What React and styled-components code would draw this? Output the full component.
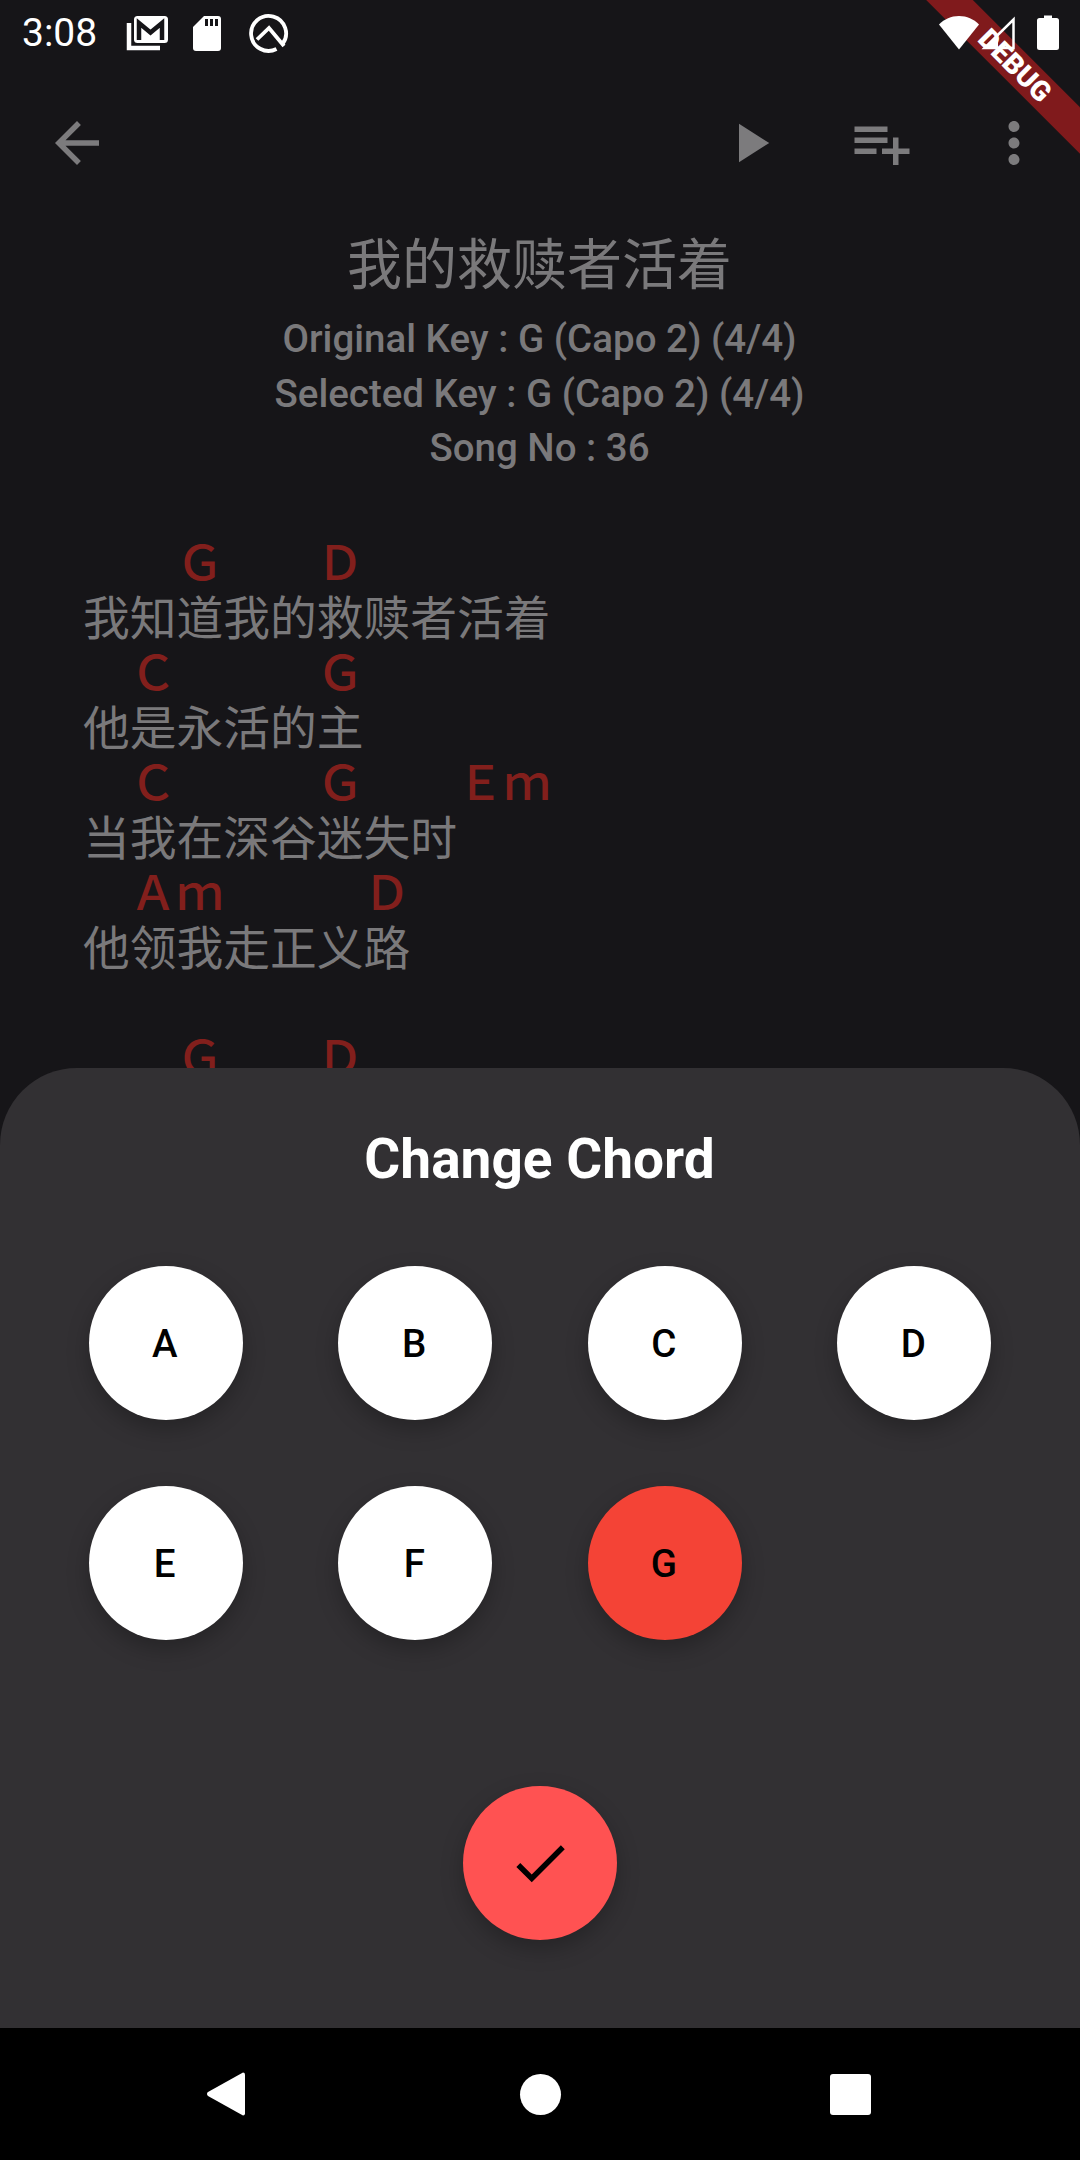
import styled, { createGlobalStyle } from 'styled-components';

const GlobalStyle = createGlobalStyle`
  html, body {
    margin: 0;
    padding: 0;
    background: #000;
  }
  * {
    box-sizing: border-box;
  }
`;

const Page = styled.div`
  position: relative;
  width: 1080px;
  height: 2160px;
  overflow: hidden;
  background: #161518;
  font-family: Roboto, 'Noto Sans CJK SC', sans-serif;
`;

const StatusBar = styled.div`
  display: flex;
  align-items: center;
  height: 66px;
  padding-left: 22px;
  color: #fff;
`;
const Clock = styled.span`
  width: 102px;
  font-size: 39px;
  line-height: 66px;
`;
const StatusIcons = styled.div`
  display: flex;
  align-items: center;
  gap: ${(p) => p.$gap}px;
  margin-left: ${(p) => p.$left}px;
`;

const AppBar = styled.div`
  display: flex;
  align-items: center;
  height: 154px;
  padding-left: 11px;
  color: #7c7b7d;
`;
const IconButton = styled.div`
  display: flex;
  align-items: center;
  justify-content: center;
  width: 132px;
  height: 132px;
  margin-left: ${(p) => (p.$auto ? 'auto' : '0')};
`;
const MaterialIcon = styled.svg`
  display: block;
  width: 66px;
  height: 66px;
  fill: currentColor;
`;

const Header = styled.div`
  text-align: center;
  color: #7a797b;
`;
const SongTitle = styled.div`
  margin-bottom: 12px;
  margin-right: 1px;
  font-family: 'Noto Sans CJK SC', sans-serif;
  font-size: 55px;
  line-height: 80px;
`;
const SongInfo = styled.div`
  margin-right: 1px;
  font-size: 38.5px;
  font-weight: 500;
  line-height: 54.5px;
`;

const Lyrics = styled.div`
  margin-top: 57px;
  padding-left: 83px;
  font-family: 'Noto Sans CJK SC', sans-serif;
  font-size: 46.75px;
  line-height: 55px;
`;
const ChordLine = styled.div`
  height: 55px;
  margin-top: -1px;
  margin-bottom: 1px;
  color: #821f1c;
  font-weight: 500;
  white-space: pre;
`;
const LyricLine = styled.div`
  height: 55px;
  margin-top: -1px;
  margin-bottom: 1px;
  color: #7a797b;
  white-space: pre;
`;

const Sheet = styled.div`
  position: absolute;
  left: 0;
  right: 0;
  top: 1068px;
  bottom: 132px;
  display: flex;
  flex-direction: column;
  align-items: center;
  background: #323033;
  border-radius: 77px 77px 0 0;
`;
const SheetTitle = styled.div`
  margin-top: 54px;
  margin-right: 1px;
  color: #fff;
  font-size: 55px;
  font-weight: 700;
  line-height: 74px;
`;
const KeyGrid = styled.div`
  display: grid;
  grid-template-columns: repeat(4, 154px);
  column-gap: 95.500px;
  row-gap: 66px;
  margin-top: 70px;
`;
const KeyButton = styled.div`
  display: flex;
  align-items: center;
  justify-content: center;
  width: 154px;
  height: 154px;
  padding-right: 2px;
  border-radius: 50%;
  background: ${(p) => (p.$selected ? '#f44336' : '#fff')};
  box-shadow: 0 9px 22px rgba(0, 0, 0, 0.25);
  color: #000;
  font-size: 38.500px;
  font-weight: 500;
`;
const ConfirmButton = styled.div`
  display: flex;
  align-items: center;
  justify-content: center;
  width: 154px;
  height: 154px;
  margin-top: 146px;
  margin-right: 1px;
  border-radius: 50%;
  background: #ff5252;
  box-shadow: 0 9px 22px rgba(0, 0, 0, 0.25);
  color: #000;
`;

const NavBar = styled.div`
  position: absolute;
  left: 0;
  right: 0;
  bottom: 0;
  display: flex;
  align-items: center;
  height: 132px;
  padding-left: 207px;
  background: #000;
`;
const NavBack = styled.svg`
  display: block;
  width: 38px;
  height: 44px;
  fill: #fff;
`;
const NavHome = styled.div`
  width: 41px;
  height: 41px;
  margin-left: 275px;
  border-radius: 50%;
  background: #fff;
`;
const NavRecent = styled.div`
  width: 41px;
  height: 41px;
  margin-left: 269px;
  border-radius: 3px;
  background: #fff;
`;

const DebugBanner = styled.div`
  position: absolute;
  left: 895px;
  top: 48.500px;
  width: 240px;
  height: 33px;
  background: #801a1c;
  color: #fff;
  font-size: 28px;
  font-weight: 900;
  line-height: 33px;
  text-align: center;
  transform: rotate(45deg);
`;
const SystemIcons = styled.div`
  position: absolute;
  top: 14px;
  left: 938px;
  display: flex;
  align-items: flex-start;
`;

const MailIcon = () => (
  <svg width="42" height="36" viewBox="0 0 42 36">
    <path d="M3 8v25h31" fill="none" stroke="#fff" strokeWidth="4.500" />
    <rect x="8" y="1" width="34" height="27" rx="3.500" fill="#fff" />
    <path d="M13 25V8l11.500 9.500L36 8v17" fill="none" stroke="#161518" strokeWidth="4.500" />
  </svg>
);

const SdIcon = () => (
  <svg width="28" height="36" viewBox="0 0 28 36">
    <path d="M11 1h14a3 3 0 0 1 3 3v29a3 3 0 0 1-3 3H3a3 3 0 0 1-3-3V12z" fill="#fff" />
    <path d="M12 4h3v7h-3zM17 4h3v7h-3zM22 4h3v7h-3z" fill="#161518" />
  </svg>
);

const QIcon = () => (
  <svg width="40" height="40" viewBox="0 0 40 40" fill="none" stroke="#fff" strokeWidth="3.800">
    <path d="M27.500 36A17.500 17.500 0 1 1 33.500 31" />
    <path d="M8 26.500L20 15l15 18" />
  </svg>
);

const WifiIcon = () => (
  <svg width="42" height="36" viewBox="0 0 42 36">
    <path d="M21 35.500L1 10.500C6.500 5 13 2 21 2s14.500 3 20 8.500z" fill="#fff" />
  </svg>
);

const SignalIcon = () => (
  <svg width="36" height="36" viewBox="0 0 36 36" fill="none">
    <path d="M33.500 5.500V34H4.500z" stroke="#fff" strokeWidth="2.500" />
    <path d="M3 35L18 20v15z" fill="#fff" />
  </svg>
);

const BatteryIcon = () => (
  <svg width="22" height="36" viewBox="0 0 22 36">
    <path
      d="M7 1.500h8V4h4.500A2.500 2.500 0 0 1 22 6.500V33.500A2.500 2.500 0 0 1 19.500 36H2.500A2.500 2.500 0 0 1 0 33.500V6.500A2.500 2.500 0 0 1 2.500 4H7z"
      fill="#fff"
    />
  </svg>
);

const verses = [
  { chords: '　　Ｇ　　Ｄ', words: '我知道我的救赎者活着' },
  { chords: '　Ｃ　　　Ｇ', words: '他是永活的主' },
  { chords: '　Ｃ　　　Ｇ　　Ｅｍ', words: '当我在深谷迷失时' },
  { chords: '　Ａｍ　　　Ｄ', words: '他领我走正义路' },
];

const keys = ['A', 'B', 'C', 'D', 'E', 'F', 'G'];

export default function App() {
  return (
    <Page>
      <GlobalStyle />
      <StatusBar>
        <Clock>3:08</Clock>
        <StatusIcons $left={2} $gap={25}>
          <MailIcon />
          <SdIcon />
        </StatusIcons>
        <StatusIcons $left={28} $gap={0}>
          <QIcon />
        </StatusIcons>
      </StatusBar>
      <AppBar>
        <IconButton>
          <MaterialIcon viewBox="0 0 24 24">
            <path d="M20 11H7.830l5.590-5.590L12 4l-8 8 8 8 1.410-1.410L7.830 13H20v-2z" />
          </MaterialIcon>
        </IconButton>
        <IconButton $auto>
          <MaterialIcon viewBox="0 0 24 24">
            <path d="M8 5v14l11-7z" />
          </MaterialIcon>
        </IconButton>
        <IconButton>
          <MaterialIcon viewBox="0 0 24 24">
            <path d="M14 10H2v2h12v-2zm0-4H2v2h12V6zm4 8v-4h-2v4h-4v2h4v4h2v-4h4v-2h-4zM2 16h8v-2H2v2z" />
          </MaterialIcon>
        </IconButton>
        <IconButton>
          <MaterialIcon viewBox="0 0 24 24">
            <path d="M12 8c1.100 0 2-.9 2-2s-.9-2-2-2-2 .9-2 2 .9 2 2 2zm0 2c-1.100 0-2 .9-2 2s.9 2 2 2 2-.9 2-2-.9-2-2-2zm0 6c-1.100 0-2 .9-2 2s.9 2 2 2 2-.9 2-2-.9-2-2-2z" />
          </MaterialIcon>
        </IconButton>
      </AppBar>
      <Header>
        <SongTitle>我的救赎者活着</SongTitle>
        <SongInfo>Original Key : G (Capo 2) (4/4)</SongInfo>
        <SongInfo>Selected Key : G (Capo 2) (4/4)</SongInfo>
        <SongInfo>Song No : 36</SongInfo>
      </Header>
      <Lyrics>
        {verses.map((verse) => (
          <div key={verse.words}>
            <ChordLine>{verse.chords}</ChordLine>
            <LyricLine>{verse.words}</LyricLine>
          </div>
        ))}
        <LyricLine />
        <ChordLine>{verses[0].chords}</ChordLine>
      </Lyrics>
      <DebugBanner>DEBUG</DebugBanner>
      <SystemIcons>
        <WifiIcon />
        <SignalIcon />
        <StatusIcons $left={21} $gap={0}>
          <BatteryIcon />
        </StatusIcons>
      </SystemIcons>
      <Sheet>
        <SheetTitle>Change Chord</SheetTitle>
        <KeyGrid>
          {keys.map((key) => (
            <KeyButton key={key} $selected={key === 'G'}>
              {key}
            </KeyButton>
          ))}
        </KeyGrid>
        <ConfirmButton>
          <MaterialIcon viewBox="0 0 24 24">
            <path d="M9 16.170L4.830 12l-1.420 1.410L9 19 21 7l-1.410-1.410z" />
          </MaterialIcon>
        </ConfirmButton>
      </Sheet>
      <NavBar>
        <NavBack viewBox="0 0 38 44">
          <path d="M36 0.500a2 2 0 0 1 2 2v39a2 2 0 0 1-2 2L1 24a2.500 2.500 0 0 1 0-4z" />
        </NavBack>
        <NavHome />
        <NavRecent />
      </NavBar>
    </Page>
  );
}
